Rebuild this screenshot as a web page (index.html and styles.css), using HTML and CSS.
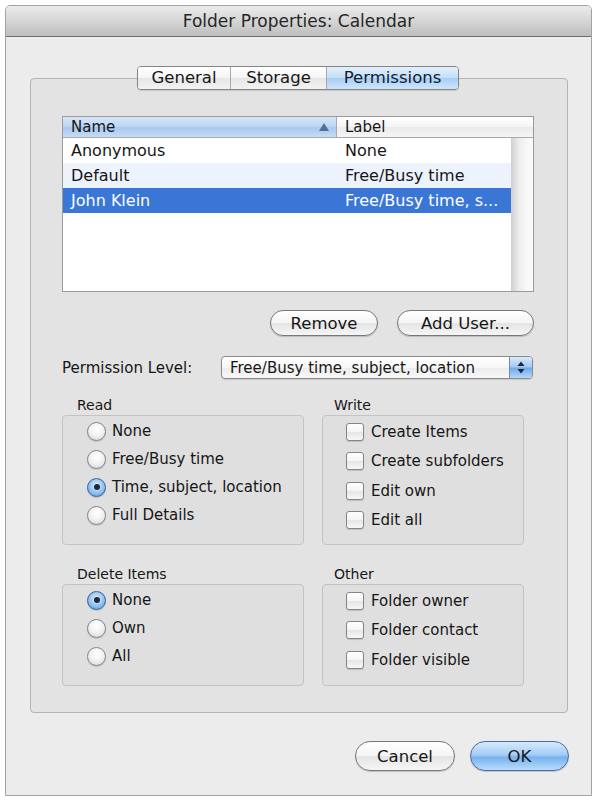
FILE: index.html
```html
<!DOCTYPE html>
<html>
<head>
<meta charset="utf-8">
<title>Folder Properties: Calendar</title>
<link rel="stylesheet" href="styles.css">
</head>
<body>
<div class="window">
  <div class="titlebar">Folder Properties: Calendar</div>
  <div class="tabbox">
    <div class="tabs">
      <div class="tab tab-general">General</div>
      <div class="tab tab-storage">Storage</div>
      <div class="tab tab-perm active">Permissions</div>
    </div>
    <div class="table">
      <div class="thead">
        <div class="th th-name"><span>Name</span><span class="sort"></span></div>
        <div class="th th-label">Label</div>
      </div>
      <div class="tbody">
        <div class="rows">
          <div class="row"><span class="c-name">Anonymous</span><span class="c-label">None</span></div>
          <div class="row alt"><span class="c-name">Default</span><span class="c-label">Free/Busy time</span></div>
          <div class="row sel"><span class="c-name">John Klein</span><span class="c-label">Free/Busy time, s...</span></div>
        </div>
        <div class="scrollcol"></div>
      </div>
    </div>
    <div class="btnrow">
      <div class="btn btn-remove">Remove</div>
      <div class="btn btn-add">Add User...</div>
    </div>
    <div class="levelrow">
      <span class="level-label">Permission Level:</span>
      <div class="select">
        <span class="select-text">Free/Busy time, subject, location</span>
        <span class="stepper">
          <svg width="8" height="13" viewBox="0 0 8 13"><path d="M4 0.5 L7.5 5 L0.5 5 Z" fill="#1c2838"/><path d="M4 12.5 L7.5 8 L0.5 8 Z" fill="#1c2838"/></svg>
        </span>
      </div>
    </div>
    <div class="groups">
      <div class="group left">
        <div class="gtitle">Read</div>
        <div class="gbox box-tall">
          <div class="opt ropt"><span class="radio"></span>None</div>
          <div class="opt ropt"><span class="radio"></span>Free/Busy time</div>
          <div class="opt ropt"><span class="radio on"></span>Time, subject, location</div>
          <div class="opt ropt"><span class="radio"></span>Full Details</div>
        </div>
      </div>
      <div class="group right">
        <div class="gtitle">Write</div>
        <div class="gbox box-tall">
          <div class="opt copt"><span class="check"></span>Create Items</div>
          <div class="opt copt"><span class="check"></span>Create subfolders</div>
          <div class="opt copt"><span class="check"></span>Edit own</div>
          <div class="opt copt"><span class="check"></span>Edit all</div>
        </div>
      </div>
      <div class="group left">
        <div class="gtitle">Delete Items</div>
        <div class="gbox box-short">
          <div class="opt ropt"><span class="radio on"></span>None</div>
          <div class="opt ropt"><span class="radio"></span>Own</div>
          <div class="opt ropt"><span class="radio"></span>All</div>
        </div>
      </div>
      <div class="group right">
        <div class="gtitle">Other</div>
        <div class="gbox box-short">
          <div class="opt copt"><span class="check"></span>Folder owner</div>
          <div class="opt copt"><span class="check"></span>Folder contact</div>
          <div class="opt copt"><span class="check"></span>Folder visible</div>
        </div>
      </div>
    </div>
  </div>
  <div class="footer">
    <div class="btn btn-cancel">Cancel</div>
    <div class="btn btn-ok">OK</div>
  </div>
</div>
</body>
</html>
```
FILE: styles.css
```css
html, body {
  margin: 0;
  padding: 0;
  background: #ffffff;
}

body {
  font-family: "DejaVu Sans", "Liberation Sans", sans-serif;
  color: #161616;
}

.window {
  margin: 5px 0 0 5px;
  width: 587px;
  height: 791px;
  box-sizing: border-box;
  background: #ececec;
  border: 1px solid #a3a3a3;
  border-radius: 5px 5px 0 0;
  display: flex;
  flex-direction: column;
}

.titlebar {
  height: 31px;
  box-sizing: border-box;
  border-bottom: 1px solid #6f6f6f;
  border-radius: 4px 4px 0 0;
  background: linear-gradient(#ebebeb, #d3d3d3 55%, #bdbdbd);
  text-align: center;
  font-size: 17px;
  line-height: 30px;
  color: #262626;
}

.tabbox {
  margin: 41px 0 0 24px;
  width: 538px;
  box-sizing: border-box;
  border: 1px solid #b3b3b3;
  border-radius: 4px;
  background: #e3e3e3;
  padding: 0 33px 26px 31px;
  display: flex;
  flex-direction: column;
}

.tabs {
  margin: -13px auto 0;
  height: 24px;
  box-sizing: border-box;
  display: flex;
  border: 1px solid #858585;
  border-radius: 4px;
  overflow: hidden;
  box-shadow: 0 1px 1px rgba(0, 0, 0, 0.12);
}

.tab {
  font-size: 16.5px;
  line-height: 22px;
  text-align: center;
  background: linear-gradient(#ffffff, #f4f4f4 50%, #e6e6e6 52%, #f3f3f3);
  color: #161616;
}

.tab + .tab {
  border-left: 1px solid #a8a8a8;
}

.tab-general { width: 92px; }
.tab-storage { width: 95px; }
.tab-perm { width: 131px; }

.tab.active {
  background: linear-gradient(#e3f0fd, #c4def8 50%, #a9cdf4 52%, #cfe6fc);
  color: #0f1d33;
}

.table {
  margin-top: 26px;
  height: 176px;
  box-sizing: border-box;
  border: 1px solid #9b9b9b;
  background: #ffffff;
  display: flex;
  flex-direction: column;
}

.thead {
  height: 21px;
  box-sizing: border-box;
  border-bottom: 1px solid #a9a9a9;
  display: flex;
  font-size: 15px;
  line-height: 20px;
}

.th-name {
  width: 274px;
  box-sizing: border-box;
  border-right: 1px solid #a9a9a9;
  padding: 0 7px 0 8px;
  display: flex;
  align-items: center;
  justify-content: space-between;
  background: linear-gradient(#d6e6f8, #bcd5f3 50%, #a7c8ef 52%, #c5dcf6);
}

.sort {
  width: 0;
  height: 0;
  border-left: 5px solid transparent;
  border-right: 5px solid transparent;
  border-bottom: 8px solid #52709a;
}

.th-label {
  flex: 1;
  padding-left: 8px;
  background: linear-gradient(#ffffff, #f4f4f4 50%, #ebebeb 52%, #f5f5f5);
}

.tbody {
  flex: 1;
  display: flex;
}

.rows {
  flex: 1;
  display: flex;
  flex-direction: column;
}

.row {
  height: 25px;
  display: flex;
  align-items: center;
  font-size: 16px;
}

.row.alt {
  background: #edf3fd;
}

.row.sel {
  background: #3a76d5;
  color: #ffffff;
}

.c-name {
  width: 274px;
  box-sizing: border-box;
  padding-left: 8px;
}

.c-label {
  padding-left: 8px;
  white-space: nowrap;
}

.scrollcol {
  width: 22px;
  background: linear-gradient(to right, #cfcfcf, #ececec 35%, #f7f7f7 70%, #fbfbfb);
}

.btnrow {
  margin-top: 18px;
  display: flex;
  justify-content: flex-end;
  gap: 19px;
}

.btn {
  box-sizing: border-box;
  height: 26px;
  border: 1px solid #777777;
  border-radius: 13px;
  background: linear-gradient(#ffffff, #f5f5f5 48%, #e4e4e4 52%, #f6f6f6);
  box-shadow: 0 1px 1px rgba(0, 0, 0, 0.18);
  display: flex;
  align-items: center;
  justify-content: center;
  font-size: 16.5px;
  color: #161616;
}

.btn-remove { width: 108px; }
.btn-add { width: 137px; }

.levelrow {
  margin-top: 20px;
  height: 23px;
  display: flex;
  align-items: center;
}

.level-label {
  font-size: 15px;
}

.select {
  margin: 0 1px 0 auto;
  width: 312px;
  height: 23px;
  box-sizing: border-box;
  border: 1px solid #8a8a8a;
  border-radius: 4px;
  background: linear-gradient(#ffffff, #f7f7f7 50%, #ececec 52%, #f8f8f8);
  box-shadow: 0 1px 1px rgba(0, 0, 0, 0.12);
  display: flex;
  align-items: center;
  overflow: hidden;
}

.select-text {
  flex: 1;
  padding-left: 8px;
  font-size: 15px;
}

.stepper {
  width: 22px;
  height: 100%;
  border-left: 1px solid #6d8fbd;
  background: linear-gradient(#d9ebfc, #9fc8f2 48%, #6fa9ea 52%, #b3d8fa);
  display: flex;
  align-items: center;
  justify-content: center;
}

.groups {
  margin-top: 17px;
  display: grid;
  grid-template-columns: 242px 202px;
  column-gap: 18px;
  row-gap: 20px;
}

.gtitle {
  height: 18px;
  font-size: 14px;
  line-height: 18px;
}

.group.left .gtitle { padding-left: 15px; }
.group.right .gtitle { padding-left: 12px; }

.gbox {
  margin-top: 1px;
  box-sizing: border-box;
  border: 1px solid #c3c3c3;
  border-radius: 4px;
  background: #dfdfdf;
  padding-top: 1px;
  display: flex;
  flex-direction: column;
}

.box-tall { height: 130px; }
.box-short { height: 102px; }

.opt {
  display: flex;
  align-items: center;
  font-size: 15px;
  white-space: nowrap;
}

.ropt {
  height: 28px;
  padding-left: 24px;
}

.copt {
  height: 29.5px;
  padding-left: 23px;
}

.radio {
  position: relative;
  width: 19px;
  height: 19px;
  margin-right: 6px;
  box-sizing: border-box;
  border: 1px solid #858585;
  border-radius: 50%;
  background: radial-gradient(circle at 50% 35%, #ffffff 0%, #f3f3f3 45%, #d2d2d2 100%);
  box-shadow: 0 1px 1px rgba(0, 0, 0, 0.15);
}

.radio.on {
  border-color: #36659f;
  background: radial-gradient(circle at 50% 40%, #e7f2fd 0%, #a9cff5 40%, #4f90db 100%);
}

.radio.on::after {
  content: "";
  position: absolute;
  left: 50%;
  top: 50%;
  width: 6px;
  height: 6px;
  margin: -3px 0 0 -3px;
  border-radius: 50%;
  background: #1b2a40;
}

.check {
  width: 18px;
  height: 18px;
  margin-right: 7px;
  box-sizing: border-box;
  border: 1px solid #858585;
  border-radius: 3px;
  background: linear-gradient(#ffffff, #f5f5f5 48%, #e6e6e6 52%, #f7f7f7);
  box-shadow: 0 1px 1px rgba(0, 0, 0, 0.15);
}

.footer {
  margin: 28px 22px 0 0;
  display: flex;
  justify-content: flex-end;
  gap: 15px;
}

.footer .btn {
  height: 30px;
  border-radius: 15px;
}

.btn-cancel { width: 100px; }

.btn-ok {
  width: 99px;
  border-color: #4a6c9e;
  background: linear-gradient(#d6e9fc, #a5cdf5 45%, #78b2ee 55%, #b8dcfb);
}
```
